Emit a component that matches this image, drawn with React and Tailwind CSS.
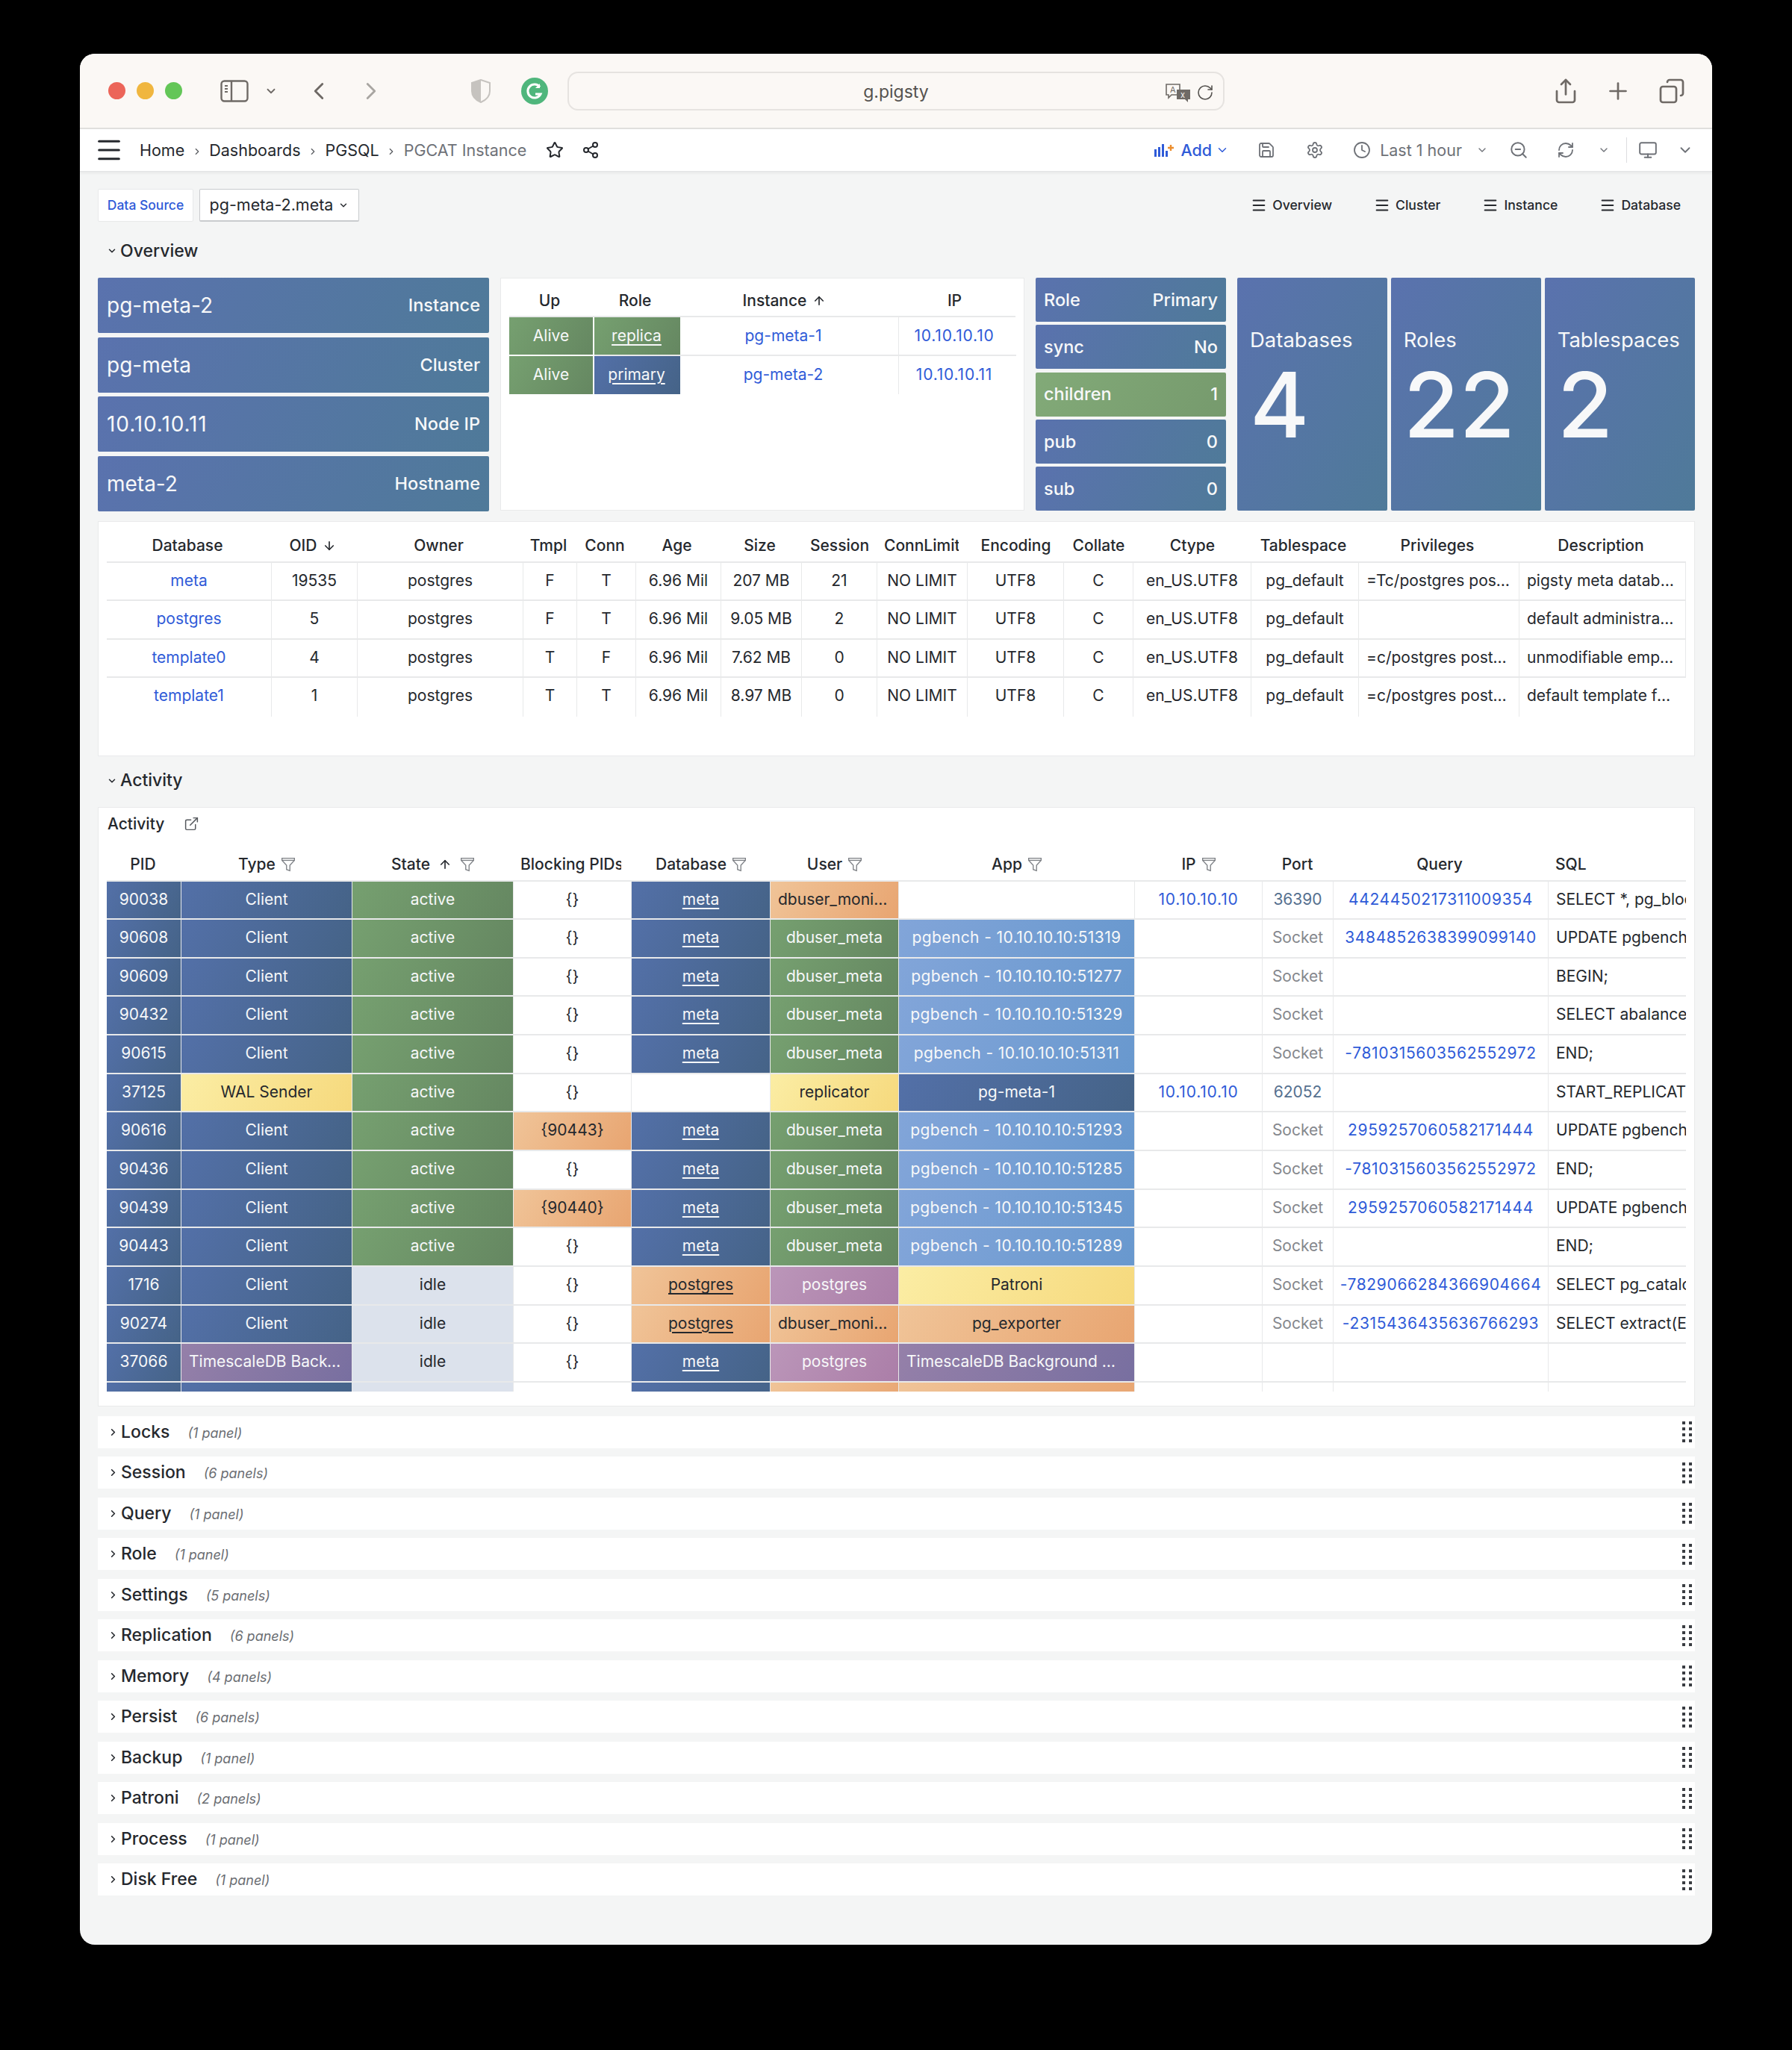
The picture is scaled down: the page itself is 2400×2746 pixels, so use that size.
import {
  ArrowDown,
  ArrowUp,
  ChevronDown,
  ChevronLeft,
  ChevronRight,
  Clock,
  Copy,
  ExternalLink,
  Menu,
  Monitor,
  Plus,
  RefreshCw,
  RotateCw,
  Save,
  Settings,
  Share,
  Share2,
  Star,
  ZoomOut,
} from "lucide-react";

const tones = {
  blue: "text-[#f7f8f9] bg-[linear-gradient(120deg,#5370a8,#456387)]",
  green: "text-[#f7f8f9] bg-[linear-gradient(120deg,#76a070,#658761)]",
  peach: "text-[#25282d] bg-[linear-gradient(120deg,#f0c498,#e8a571)]",
  purple: "text-[#f7f8f9] bg-[linear-gradient(120deg,#bb96b9,#ab7ea8)]",
  yellow: "text-[#25282d] bg-[linear-gradient(120deg,#fbeda4,#f6d97d)]",
  sky: "text-[#f7f8f9] bg-[linear-gradient(120deg,#82a5d9,#6898ce)]",
  violet: "text-[#f7f8f9] bg-[linear-gradient(120deg,#9580a9,#786fa0)]",
  idle: "text-[#25282d] bg-[#dce2ec]",
  plain: "text-[#25282d]",
  link: "text-[#2f5bd8]",
  port: "text-[#55708f]",
  muted: "text-[#85888d]",
};

const statBg = "bg-[linear-gradient(120deg,#5a72ae,#4f7a99)]";

const stats = [
  ["pg-meta-2", "Instance", ""],
  ["pg-meta", "Cluster", ""],
  ["10.10.10.11", "Node IP", "tracking-[0.9px]"],
  ["meta-2", "Hostname", ""],
];

const flags = [
  ["Role", "Primary", statBg],
  ["sync", "No", statBg],
  ["children", "1", "bg-[linear-gradient(120deg,#82aa78,#769a6d)]"],
  ["pub", "0", statBg],
  ["sub", "0", statBg],
];

const counts = [
  ["Databases", "4"],
  ["Roles", "22"],
  ["Tablespaces", "2"],
];

const databases = [
  ["meta", "19535", "F", "T", "207 MB", "21", "=Tc/postgres postgres=CTc/postgres", "pigsty meta database"],
  ["postgres", "5", "F", "T", "9.05 MB", "2", "", "default administrative connection database"],
  ["template0", "4", "T", "F", "7.62 MB", "0", "=c/postgres postgres=CTc/postgres", "unmodifiable empty database"],
  ["template1", "1", "T", "T", "8.97 MB", "0", "=c/postgres postgres=CTc/postgres", "default template for new databases"],
];

const pgbench = (port) => `pgbench - 10.10.10.10:${port}`;

const activity = [
  { pid: "90038", type: "Client", typeTone: "blue", state: "active", block: "{}", db: "meta", dbTone: "blue", user: "dbuser_monitor", userTone: "peach", app: "", appTone: "plain", ip: "10.10.10.10", port: "36390", query: "4424450217311009354", sql: "SELECT *, pg_blocking_pids(pid)" },
  { pid: "90608", type: "Client", typeTone: "blue", state: "active", block: "{}", db: "meta", dbTone: "blue", user: "dbuser_meta", userTone: "green", app: pgbench(51319), appTone: "sky", port: "Socket", query: "3484852638399099140", sql: "UPDATE pgbench_accounts" },
  { pid: "90609", type: "Client", typeTone: "blue", state: "active", block: "{}", db: "meta", dbTone: "blue", user: "dbuser_meta", userTone: "green", app: pgbench(51277), appTone: "sky", port: "Socket", query: "", sql: "BEGIN;" },
  { pid: "90432", type: "Client", typeTone: "blue", state: "active", block: "{}", db: "meta", dbTone: "blue", user: "dbuser_meta", userTone: "green", app: pgbench(51329), appTone: "sky", port: "Socket", query: "", sql: "SELECT abalance FROM" },
  { pid: "90615", type: "Client", typeTone: "blue", state: "active", block: "{}", db: "meta", dbTone: "blue", user: "dbuser_meta", userTone: "green", app: pgbench(51311), appTone: "sky", port: "Socket", query: "-7810315603562552972", sql: "END;" },
  { pid: "37125", type: "WAL Sender", typeTone: "yellow", state: "active", block: "{}", db: "", dbTone: "plain", user: "replicator", userTone: "yellow", app: "pg-meta-1", appTone: "blue", ip: "10.10.10.10", port: "62052", query: "", sql: "START_REPLICATION" },
  { pid: "90616", type: "Client", typeTone: "blue", state: "active", block: "{90443}", db: "meta", dbTone: "blue", user: "dbuser_meta", userTone: "green", app: pgbench(51293), appTone: "sky", port: "Socket", query: "2959257060582171444", sql: "UPDATE pgbench_branches" },
  { pid: "90436", type: "Client", typeTone: "blue", state: "active", block: "{}", db: "meta", dbTone: "blue", user: "dbuser_meta", userTone: "green", app: pgbench(51285), appTone: "sky", port: "Socket", query: "-7810315603562552972", sql: "END;" },
  { pid: "90439", type: "Client", typeTone: "blue", state: "active", block: "{90440}", db: "meta", dbTone: "blue", user: "dbuser_meta", userTone: "green", app: pgbench(51345), appTone: "sky", port: "Socket", query: "2959257060582171444", sql: "UPDATE pgbench_branches" },
  { pid: "90443", type: "Client", typeTone: "blue", state: "active", block: "{}", db: "meta", dbTone: "blue", user: "dbuser_meta", userTone: "green", app: pgbench(51289), appTone: "sky", port: "Socket", query: "", sql: "END;" },
  { pid: "1716", type: "Client", typeTone: "blue", state: "idle", block: "{}", db: "postgres", dbTone: "peach", user: "postgres", userTone: "purple", app: "Patroni", appTone: "yellow", port: "Socket", query: "-7829066284366904664", sql: "SELECT pg_catalog" },
  { pid: "90274", type: "Client", typeTone: "blue", state: "idle", block: "{}", db: "postgres", dbTone: "peach", user: "dbuser_monitor", userTone: "peach", app: "pg_exporter", appTone: "peach", port: "Socket", query: "-2315436435636766293", sql: "SELECT extract(EPOCH" },
  { pid: "37066", type: "TimescaleDB Background", typeTone: "violet", state: "idle", block: "{}", db: "meta", dbTone: "blue", user: "postgres", userTone: "purple", app: "TimescaleDB Background Worker", appTone: "violet", port: "", query: "", sql: "" },
];

const collapsed = [
  ["Locks", "1 panel"],
  ["Session", "6 panels"],
  ["Query", "1 panel"],
  ["Role", "1 panel"],
  ["Settings", "5 panels"],
  ["Replication", "6 panels"],
  ["Memory", "4 panels"],
  ["Persist", "6 panels"],
  ["Backup", "1 panel"],
  ["Patroni", "2 panels"],
  ["Process", "1 panel"],
  ["Disk Free", "1 panel"],
];

const FilterIcon = () => (
  <svg width="20" height="20" viewBox="0 0 18 18" fill="none" stroke="#7d8085" strokeWidth="1.2" className="shrink-0">
    <path d="M1.5 1.5h15v2.5L11 10v6.5l-4-1.5V10L1.5 4z" />
    <path d="M1.5 4h15" />
  </svg>
);

const DragHandle = () => (
  <svg width="13" height="28" viewBox="0 0 13 28" fill="#3a3d42">
    {[0, 8, 16, 24].map((y) => (
      <g key={y}>
        <rect x="0" y={y} width="4" height="4" />
        <rect x="9" y={y} width="4" height="4" />
      </g>
    ))}
  </svg>
);

const SidebarIcon = () => (
  <svg width="38" height="30" viewBox="0 0 38 30" fill="none" stroke="#6f6a66" strokeWidth="2.4">
    <rect x="1.5" y="1.5" width="35" height="27" rx="4" />
    <path d="M15 1.5v27" />
    <path d="M6 8h4M6 12h4M6 16h4" strokeWidth="1.8" />
  </svg>
);

const ShieldIcon = () => (
  <svg width="28" height="32" viewBox="0 0 28 32">
    <path d="M14 1 2 5v11c0 7 5 12 12 15 7-3 12-8 12-15V5z" fill="#fbf8f5" stroke="#c6c3bf" strokeWidth="2" />
    <path d="M14 1 2 5v11c0 7 5 12 12 15z" fill="#c6c3bf" />
  </svg>
);

const GrammarlyIcon = () => (
  <svg width="36" height="36" viewBox="0 0 36 36">
    <circle cx="18" cy="18" r="18" fill="#4fb67c" />
    <path d="M25 12.5a9 9 0 1 0 1 9.5h-7" fill="none" stroke="#fff" strokeWidth="3" />
    <path d="M25 8v6h-6z" fill="#fff" />
  </svg>
);

const TranslateIcon = () => (
  <svg width="36" height="26" viewBox="0 0 36 26">
    <path d="M2 2h18v14H9l-4 4v-4H2z" fill="#fbf8f5" stroke="#6f6a66" strokeWidth="1.6" />
    <text x="7" y="13" fontSize="11" fontFamily="Inter, sans-serif" fill="#6f6a66">A</text>
    <path d="M16 9h18v13h-3v4l-4-4H16z" fill="#6f6a66" />
    <text x="21" y="20" fontSize="11" fontFamily="Inter, sans-serif" fill="#fbf8f5">x</text>
  </svg>
);

const AddPanelIcon = () => (
  <svg width="27" height="18" viewBox="0 0 27 18">
    <g fill="#2f5bd8">
      <rect x="0" y="8" width="3" height="10" />
      <rect x="5" y="5" width="3" height="13" />
      <rect x="10" y="1" width="3" height="17" />
      <rect x="15" y="10" width="3" height="8" />
    </g>
    <path d="M18 6h8M22 2v8" stroke="#ec8e2e" strokeWidth="2.4" />
  </svg>
);

const TitleBar = () => (
  <div className="flex h-[101px] shrink-0 items-center border-b-2 border-[#e1e0de] bg-[#fbf8f5] text-[#6f6a66]">
    <div className="ml-[38px] flex gap-[15px]">
      <div className="h-[23px] w-[23px] rounded-full bg-[#ec6559]" />
      <div className="h-[23px] w-[23px] rounded-full bg-[#f0b63f]" />
      <div className="h-[23px] w-[23px] rounded-full bg-[#63c657]" />
    </div>
    <div className="ml-[51px]">
      <SidebarIcon />
    </div>
    <ChevronDown size={18} strokeWidth={2.4} className="ml-[21px]" />
    <ChevronLeft size={38} strokeWidth={1.8} className="ml-[36px]" />
    <ChevronRight size={38} strokeWidth={1.8} className="ml-[32px] text-[#a9a6a2]" />
    <div className="ml-[114px]">
      <ShieldIcon />
    </div>
    <div className="ml-[40px]">
      <GrammarlyIcon />
    </div>
    <div className="relative ml-[26px] flex h-[52px] w-[880px] items-center justify-center rounded-[14px] border-2 border-[#e6e3e0] pt-[4px] text-[23px] text-[#55524f]">
      g.pigsty
      <div className="absolute right-[12px] flex items-center gap-[6px]">
        <TranslateIcon />
        <RotateCw size={24} strokeWidth={1.6} />
      </div>
    </div>
    <Share size={36} strokeWidth={1.8} className="ml-auto" />
    <Plus size={36} strokeWidth={1.8} className="ml-[34px]" />
    <Copy size={36} strokeWidth={1.8} className="ml-[36px] mr-[36px] -scale-x-100" />
  </div>
);

const Crumb = () => <ChevronRight size={14} strokeWidth={2} className="mx-[9.5px] mt-[3px] text-[#55585d]" />;

const NavBar = () => (
  <div className="flex h-[57px] shrink-0 items-center border-b border-[#e3e4e5] bg-white pl-[19px] text-[21.5px] text-[#25282d] shadow-[0_2px_4px_rgba(0,0,0,0.06)]">
    <Menu size={40} strokeWidth={1.8} />
    <span className="ml-[21px]">Home</span>
    <Crumb />
    <span>Dashboards</span>
    <Crumb />
    <span>PGSQL</span>
    <Crumb />
    <span className="text-[#6e7177]">PGCAT Instance</span>
    <Star size={24} strokeWidth={2} className="ml-[26px]" />
    <Share2 size={24} strokeWidth={2} className="ml-[24px]" />
    <div className="ml-auto flex items-center text-[#6e7177]">
      <AddPanelIcon />
      <span className="ml-[8px] font-medium text-[#2f5bd8]">Add</span>
      <ChevronDown size={18} strokeWidth={2} className="ml-[5px] text-[#2f5bd8]" />
      <Save size={24} strokeWidth={1.8} className="ml-[38px]" />
      <Settings size={24} strokeWidth={1.8} className="ml-[41px]" />
      <Clock size={24} strokeWidth={1.8} className="ml-[39px]" />
      <span className="ml-[12px]">Last 1 hour</span>
      <ChevronDown size={16} strokeWidth={2} className="ml-[19px]" />
      <ZoomOut size={26} strokeWidth={1.8} className="ml-[28px]" />
      <RefreshCw size={24} strokeWidth={1.8} className="ml-[38px]" />
      <ChevronDown size={16} strokeWidth={2} className="ml-[31px]" />
      <div className="ml-[22px] h-[34px] w-px bg-[#dcdde0]" />
      <Monitor size={26} strokeWidth={1.8} className="ml-[15px]" />
      <ChevronDown size={22} strokeWidth={2} className="ml-[26px] mr-[25px]" />
    </div>
  </div>
);

const DashLink = ({ label, className }) => (
  <div className={`flex items-center gap-[7px] text-[17.6px] font-medium text-[#25282d] ${className}`}>
    <Menu size={22} strokeWidth={2.2} />
    {label}
  </div>
);

const Toolbar = () => (
  <div className="flex h-[44px] items-center">
    <div className="flex h-full w-[128px] items-center justify-center rounded-[2px] border border-[#e8e9ea] bg-white text-[17.5px] font-medium text-[#2f5bd8]">
      Data Source
    </div>
    <div className="ml-[8px] flex h-full w-[214px] items-center justify-center gap-[7px] rounded-[2px] border border-[#c9cbce] border-b-2 bg-white text-[21.5px] text-[#25282d]">
      pg-meta-2.meta
      <ChevronDown size={14} strokeWidth={2.4} />
    </div>
    <DashLink label="Overview" className="ml-auto" />
    <DashLink label="Cluster" className="ml-[56px]" />
    <DashLink label="Instance" className="ml-[56px]" />
    <DashLink label="Database" className="ml-[56px] mr-[19px]" />
  </div>
);

const SectionTitle = ({ label, className }) => (
  <div className={`flex h-[44px] items-center pl-[12px] text-[23px] font-medium text-[#25282d] ${className}`}>
    <ChevronDown size={14} strokeWidth={2.6} className="mr-[4px]" />
    {label}
  </div>
);

const StatBars = () => (
  <div className="flex w-[524px] shrink-0 flex-col gap-[5.5px]">
    {stats.map(([value, label, extra]) => (
      <div key={label} className={`flex h-[74px] items-center justify-between rounded-[2px] px-[12px] text-[#f7f8f9] ${statBg}`}>
        <span className={`text-[28px] ${extra}`}>{value}</span>
        <span className="text-[23.5px] font-medium">{label}</span>
      </div>
    ))}
  </div>
);

const InstanceTable = () => (
  <div className="ml-[15px] h-[312px] w-[702px] shrink-0 border border-[#e9eaeb] bg-white px-[11px]">
    <div className="grid h-[52px] grid-cols-[114px_115px_293px_157px] items-center border-b-2 border-[#e8e9ea] pt-[10px] text-center text-[21px] font-medium text-[#25282d]">
      <span className="pr-[6px]">Up</span>
      <span className="pr-[6px]">Role</span>
      <span className="flex items-center justify-center gap-[8px] pr-[14px]">
        Instance
        <ArrowUp size={18} strokeWidth={2.2} />
      </span>
      <span className="pr-[8px]">IP</span>
    </div>
    <div className="grid grid-cols-[114px_115px_293px_157px] grid-rows-[51.5px_51.5px] text-center text-[21px] leading-[49px]">
      <div className={`border-r-2 border-b-2 border-white ${tones.green}`}>Alive</div>
      <div className={`border-b-2 border-[#e8e9ea] pr-[2px] underline decoration-2 underline-offset-4 ${tones.green}`}>replica</div>
      <div className="border-r border-b-2 border-[#e8e9ea] pr-[16px] text-[#2f5bd8]">pg-meta-1</div>
      <div className="border-b-2 border-[#e8e9ea] pr-[9px] tracking-[0.8px] text-[#2f5bd8]">10.10.10.10</div>
      <div className={`border-r-2 border-white ${tones.green}`}>Alive</div>
      <div className={`pr-[2px] underline decoration-2 underline-offset-4 ${tones.blue}`}>primary</div>
      <div className="border-r border-[#e8e9ea] pr-[16px] text-[#2f5bd8]">pg-meta-2</div>
      <div className="pr-[9px] tracking-[0.8px] text-[#2f5bd8]">10.10.10.11</div>
    </div>
  </div>
);

const FlagBars = () => (
  <div className="ml-[15px] flex w-[255px] shrink-0 flex-col gap-[4.25px]">
    {flags.map(([label, value, bg]) => (
      <div key={label} className={`flex h-[59px] items-center justify-between rounded-[2px] px-[11px] text-[23.5px] font-medium text-[#f7f8f9] ${bg}`}>
        <span>{label}</span>
        <span>{value}</span>
      </div>
    ))}
  </div>
);

const CountCards = () => (
  <div className="ml-[15px] flex flex-1 gap-[4.5px]">
    {counts.map(([label, value]) => (
      <div key={label} className={`flex h-[312px] flex-1 flex-col rounded-[2px] pl-[17px] pt-[65px] text-[#f7f8f9] ${statBg}`}>
        <span className="text-[27.5px] leading-[36px]">{label}</span>
        <span className="-mt-[6px] text-[121px] font-medium leading-[150px]">{value}</span>
      </div>
    ))}
  </div>
);

const dbCols = "grid grid-cols-[221px_115px_222px_72px_79px_114px_108px_101px_121px_129px_93px_158px_144px_215px_223px]";

const DbHead = ({ children, className = "" }) => (
  <div className={`flex items-center justify-center overflow-hidden whitespace-nowrap pt-[11px] pr-[5px] ${className}`}>{children}</div>
);

const DbCell = ({ children, last, left, className = "" }) => (
  <div
    className={`truncate border-r border-[#e8e9ea] leading-[47px] last:border-r-0 ${last ? "" : "border-b-2"} ${
      left ? "pl-[10px] pr-[10px] text-left" : "px-[6px] text-center"
    } ${className}`}
  >
    {children}
  </div>
);

const DatabaseTable = () => (
  <div className="mt-[13px] h-[315px] border border-[#e9eaeb] bg-white px-[11px]">
    <div className={`${dbCols} h-[55px] border-b-2 border-[#e8e9ea] text-[21px] font-medium text-[#25282d]`}>
      <DbHead>Database</DbHead>
      <DbHead className="gap-[8px]">
        OID
        <ArrowDown size={18} strokeWidth={2.2} />
      </DbHead>
      <DbHead>Owner</DbHead>
      <DbHead>Tmpl</DbHead>
      <DbHead>Conn</DbHead>
      <DbHead>Age</DbHead>
      <DbHead>Size</DbHead>
      <DbHead className="!pr-0">Session</DbHead>
      <DbHead className="!justify-start !pr-0 pl-[9px] mr-[12px]">ConnLimit</DbHead>
      <DbHead className="!pr-0">Encoding</DbHead>
      <DbHead className="!pr-0">Collate</DbHead>
      <DbHead className="!pr-0">Ctype</DbHead>
      <DbHead>Tablespace</DbHead>
      <DbHead>Privileges</DbHead>
      <DbHead>Description</DbHead>
    </div>
    <div className={`${dbCols} auto-rows-[51.67px] text-[21px] text-[#25282d]`}>
      {databases.map((row, i) => {
        const last = i === databases.length - 1;
        return [
          <DbCell key="name" last={last} className="text-[#2f5bd8]">{row[0]}</DbCell>,
          <DbCell key="oid" last={last}>{row[1]}</DbCell>,
          <DbCell key="owner" last={last}>postgres</DbCell>,
          <DbCell key="tmpl" last={last}>{row[2]}</DbCell>,
          <DbCell key="conn" last={last}>{row[3]}</DbCell>,
          <DbCell key="age" last={last} className="!px-0">6.96 Mil</DbCell>,
          <DbCell key="size" last={last} className="!px-0">{row[4]}</DbCell>,
          <DbCell key="session" last={last}>{row[5]}</DbCell>,
          <DbCell key="limit" last={last} className="!px-0">NO LIMIT</DbCell>,
          <DbCell key="enc" last={last}>UTF8</DbCell>,
          <DbCell key="collate" last={last}>C</DbCell>,
          <DbCell key="ctype" last={last} className="!px-0">en_US.UTF8</DbCell>,
          <DbCell key="space" last={last} className="!px-0">pg_default</DbCell>,
          <DbCell key="priv" last={last} left className="!pr-[6px]">{row[6]}</DbCell>,
          <DbCell key="desc" last={last} left>{row[7]}</DbCell>,
        ];
      })}
    </div>
  </div>
);

const actCols = "grid grid-cols-[100px_229px_216px_158px_186px_172px_316px_171px_95px_288px_184px]";

const ActHead = ({ label, filter, sort, className = "" }) => (
  <div className={`flex items-center justify-center gap-[7px] overflow-hidden whitespace-nowrap pt-[2px] ${className}`}>
    {label}
    {sort && <ArrowUp size={18} strokeWidth={2.2} className="mx-[4px] shrink-0" />}
    {filter && <FilterIcon />}
  </div>
);

const ActCell = ({ tone = "plain", underline, left, className = "", children }) => (
  <div
    className={`truncate border-r border-b-2 border-[#e8e9ea] px-[10px] leading-[48px] ${tones[tone]} ${
      left ? "text-left" : "text-center"
    } ${underline ? "underline decoration-2 underline-offset-4" : ""} ${className}`}
  >
    {children}
  </div>
);

const ActivityPanel = () => (
  <div className="h-[803px] border border-[#e9eaeb] bg-white px-[11px]">
    <div className="flex h-[44px] items-center gap-[26px] pl-[1px] text-[21px] font-medium text-[#25282d]">
      Activity
      <ExternalLink size={21} strokeWidth={1.7} className="text-[#55585d]" />
    </div>
    <div className={`${actCols} mt-[10px] h-[45px] border-b-2 border-[#e8e9ea] text-[21px] font-medium text-[#25282d]`}>
      <ActHead label="PID" className="pr-[3px]" />
      <ActHead label="Type" filter />
      <ActHead label="State" sort filter />
      <ActHead label="Blocking PIDs" className="!justify-start ml-[9px] mr-[14px]" />
      <ActHead label="Database" filter />
      <ActHead label="User" filter />
      <ActHead label="App" filter />
      <ActHead label="IP" filter />
      <ActHead label="Port" className="pr-[2px]" />
      <ActHead label="Query" className="pr-[4px]" />
      <ActHead label="SQL" className="!justify-start pl-[9px]" />
    </div>
    <div className={`${actCols} h-[683px] auto-rows-[51.67px] overflow-hidden text-[21px] text-[#25282d]`}>
      {activity.map((row) => [
        <ActCell key={`${row.pid}-pid`} tone="blue" className="!px-0">{row.pid}</ActCell>,
        <ActCell key={`${row.pid}-type`} tone={row.typeTone}>{row.type}</ActCell>,
        <ActCell key={`${row.pid}-state`} tone={row.state === "active" ? "green" : "idle"}>{row.state}</ActCell>,
        <ActCell key={`${row.pid}-block`} tone={row.block === "{}" ? "plain" : "peach"}>{row.block}</ActCell>,
        <ActCell key={`${row.pid}-db`} tone={row.dbTone} underline>{row.db}</ActCell>,
        <ActCell key={`${row.pid}-user`} tone={row.userTone}>{row.user}</ActCell>,
        <ActCell key={`${row.pid}-app`} tone={row.appTone} className={row.appTone === "sky" ? "tracking-[0.4px]" : ""}>{row.app}</ActCell>,
        <ActCell key={`${row.pid}-ip`} tone="link" className="tracking-[0.8px]">{row.ip}</ActCell>,
        <ActCell key={`${row.pid}-port`} tone={row.port === "Socket" ? "muted" : "port"} className="!px-0">{row.port}</ActCell>,
        <ActCell key={`${row.pid}-query`} tone="link" className="!px-0 tracking-[0.65px]">{row.query}</ActCell>,
        <ActCell key={`${row.pid}-sql`} left className="!overflow-hidden !text-clip !pr-0 !border-r-0">{row.sql}</ActCell>,
      ])}
      <ActCell tone="blue" />
      <ActCell tone="blue" />
      <ActCell tone="idle" />
      <ActCell />
      <ActCell tone="blue" />
      <ActCell tone="peach" />
      <ActCell tone="peach" />
      <ActCell />
      <ActCell />
      <ActCell />
      <ActCell className="!border-r-0" />
    </div>
  </div>
);

const CollapsedRow = ({ title, count }) => (
  <div className="flex h-[43px] items-center bg-white pl-[13px] pr-[4px]">
    <ChevronRight size={15} strokeWidth={2.6} className="mr-[3px] text-[#25282d]" />
    <span className="text-[23px] font-medium text-[#25282d]">{title}</span>
    <span className="ml-[24px] mt-[2px] text-[18px] italic text-[#6b6e73]">({count})</span>
    <div className="ml-auto flex">
      <DragHandle />
    </div>
  </div>
);

const App = () => {
  return (
    <div className="h-[2746px] bg-black pl-[107px] pt-[72px] font-['Inter',sans-serif]">
      <div className="flex h-[2533px] w-[2186px] flex-col overflow-hidden rounded-[20px] bg-[#f4f5f5]">
        <TitleBar />
        <NavBar />
        <div className="pl-[24px] pr-[23px] pt-[23px]">
          <Toolbar />
          <SectionTitle label="Overview" className="mt-[17px]" />
          <div className="mt-[14px] flex">
            <StatBars />
            <InstanceTable />
            <FlagBars />
            <CountCards />
          </div>
          <DatabaseTable />
          <SectionTitle label="Activity" className="mt-[11px]" />
          <div className="mt-[13px]">
            <ActivityPanel />
          </div>
          <div className="mt-[13px] flex flex-col gap-[11.5px]">
            {collapsed.map(([title, count]) => (
              <CollapsedRow key={title} title={title} count={count} />
            ))}
          </div>
        </div>
      </div>
    </div>
  );
};

export default App;
